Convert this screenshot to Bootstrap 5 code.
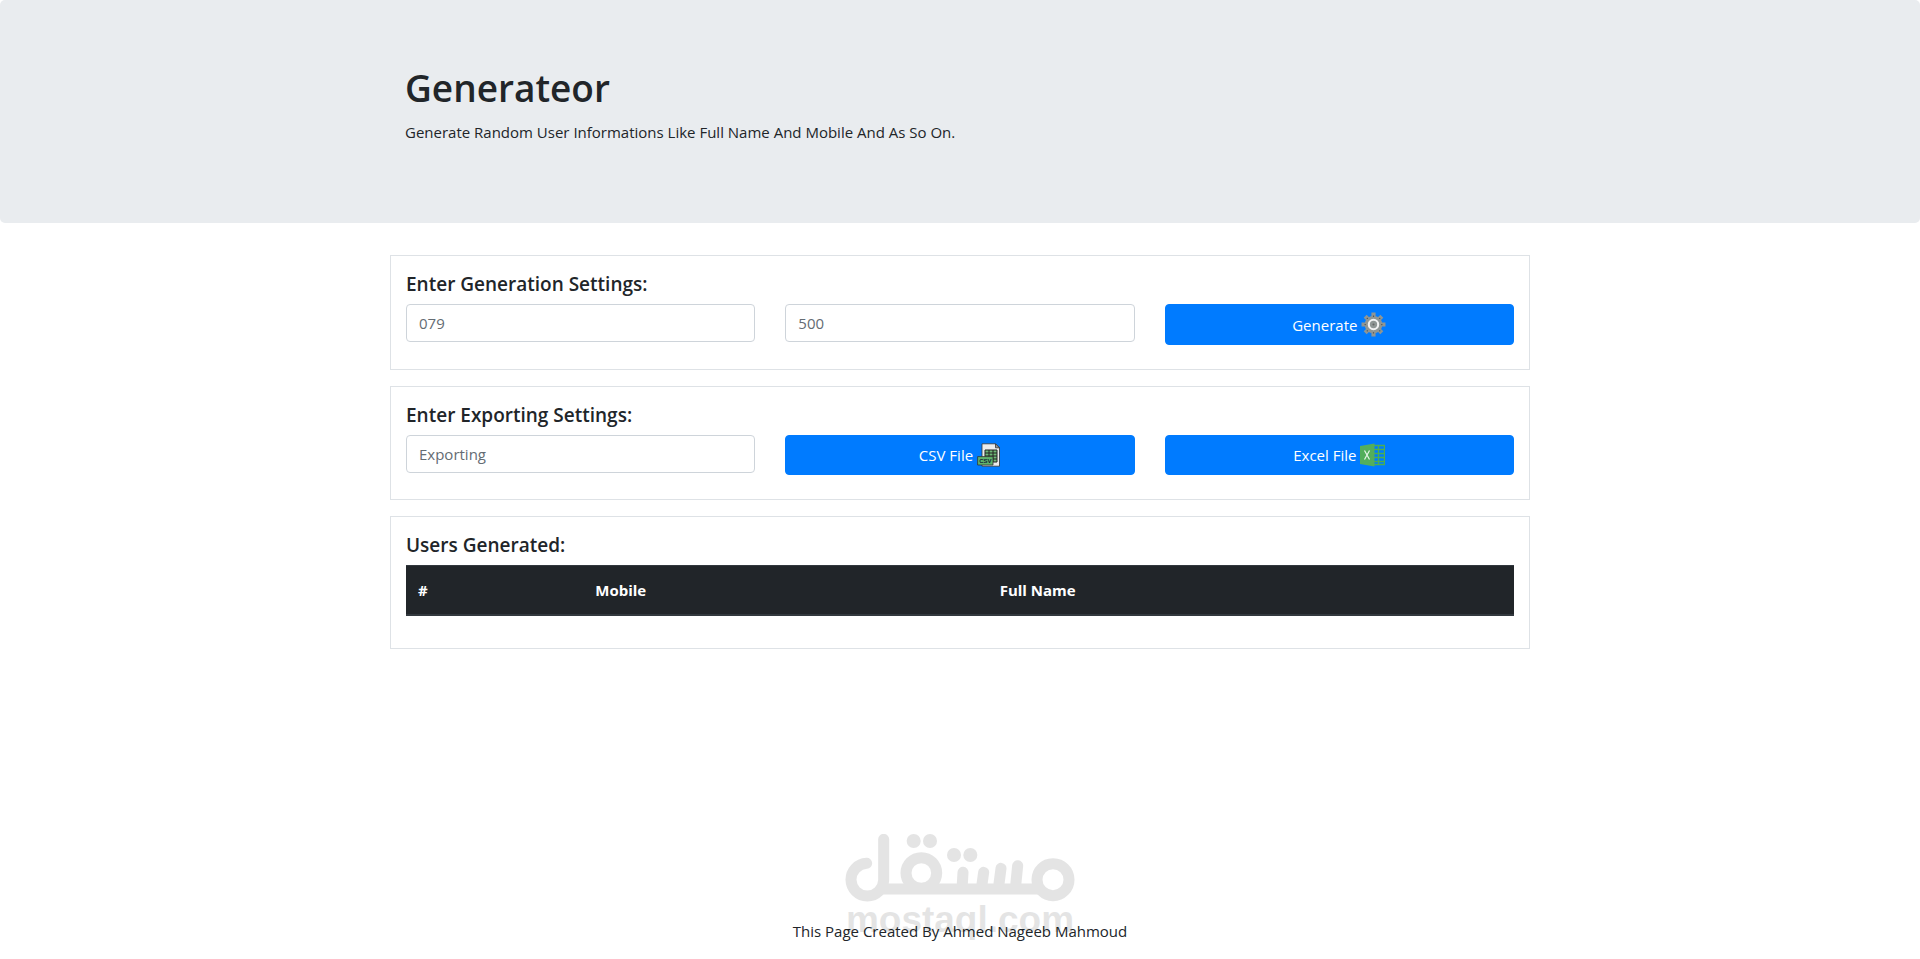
<!DOCTYPE html>
<html lang="en">
<head>
<meta charset="utf-8">
<meta name="viewport" content="width=device-width, initial-scale=1">
<title>Generateor</title>
<link href="https://cdn.jsdelivr.net/npm/bootstrap@5.3.0/dist/css/bootstrap.min.css" rel="stylesheet">
<style>
  body { font-family: "Open Sans", "Noto Sans", sans-serif; font-size: 15px; line-height: 24px; color: #212529; background: #fff; }
  .page-wrap { max-width: 1140px; }
  .row, .page-wrap { --bs-gutter-x: 30px; }
  .hero { background: #e9ecef; padding: 64px 0 63px; margin-bottom: 32px; border-radius: 5px; }
  .hero h1 { font-size: 37px; line-height: 48px; font-weight: 600; }
  .panel { border: 1px solid #dee2e6; padding: 16px 15px 24px; margin-bottom: 16px; }
  .panel h2 { font-size: 19px; line-height: 24px; font-weight: 600; }
  .form-control { font-size: 15px; line-height: 24px; border-color: #ced4da; border-radius: 4px; }
  .form-control::placeholder { color: #646c73; }
  .btn-primary { --bs-btn-bg: #007bff; --bs-btn-border-color: #007bff; --bs-btn-font-size: 15px; --bs-btn-border-radius: 4px; --bs-btn-line-height: 24px; --bs-btn-padding-y: 7px; }
  .users { table-layout: fixed; }
  .users thead th { background: #212529; color: #fff; padding: 12px; border: 0 solid #32383e; border-width: 1px 0 2px; font-weight: 700; }
  .c-num { width: 16%; } .c-mob { width: 36.5%; }
  .mark-over { position: absolute; left: 50%; bottom: 21px; transform: translateX(-50%); opacity: .1; pointer-events: none; }
  .mark-over div { font: 700 37px/36px "Liberation Sans", sans-serif; color: #000; }
</style>
</head>
<body class="d-flex flex-column min-vh-100">
<header class="hero">
  <div class="container page-wrap">
    <h1 class="mb-2">Generateor</h1>
    <p class="mb-3">Generate Random User Informations Like Full Name And Mobile And As So On.</p>
  </div>
</header>
<main class="container page-wrap px-0">
  <section class="panel">
    <h2 class="mb-2">Enter Generation Settings:</h2>
    <div class="row">
      <div class="col-4"><input class="form-control" type="text" placeholder="079" aria-label="Prefix"></div>
      <div class="col-4"><input class="form-control" type="text" placeholder="500" aria-label="Count"></div>
      <div class="col-4"><button class="btn btn-primary w-100 d-flex justify-content-center align-items-center gap-1" type="button">Generate
        <svg width="25" height="25" viewBox="0 0 24 24" aria-hidden="true"><g stroke="#8f9694" stroke-width="4"><path d="M12 .5v23M.5 12h23M4 4l16 16M20 4L4 20"/></g><circle cx="12" cy="12" r="8.5" fill="#8f9694"/><g fill="#444"><circle cx="12" cy="4" r=".6"/><circle cx="12" cy="20" r=".6"/><circle cx="4" cy="12" r=".6"/><circle cx="20" cy="12" r=".6"/><circle cx="6" cy="6" r=".6"/><circle cx="18" cy="6" r=".6"/><circle cx="6" cy="18" r=".6"/><circle cx="18" cy="18" r=".6"/></g><circle cx="12" cy="12" r="4.5" fill="#8f9694" stroke="#f2f2f2" stroke-width="2"/><circle cx="12" cy="12" r="1" fill="#666"/></svg></button></div>
    </div>
  </section>
  <section class="panel">
    <h2 class="mb-2">Enter Exporting Settings:</h2>
    <div class="row">
      <div class="col-4"><input class="form-control" type="text" placeholder="Exporting" aria-label="File name"></div>
      <div class="col-4"><button class="btn btn-primary w-100 d-flex justify-content-center align-items-center gap-1" type="button">CSV File
        <svg width="24" height="24" viewBox="0 0 24 24" aria-hidden="true"><path d="M5 .8h13.500l4 4v18.400H5z" fill="#ececec" stroke="#333" stroke-width=".8"/><path d="M18.500.8v4h4z" fill="#999" stroke="#333" stroke-width=".8"/><path d="M8 7h12v12H8z" fill="#6fb878" stroke="#222"/><path d="M8 10h12M8 13h12M16 16h4M12 7v7M16 7v12" stroke="#222" fill="none"/><path d="M.6 13.600h15.400v8.400H.6z" fill="#5fb36c" stroke="#333" stroke-width=".8"/><text x="8.300" y="20.200" text-anchor="middle" font-family="Liberation Sans, sans-serif" font-size="6" font-weight="700" fill="#123">CSV</text></svg></button></div>
      <div class="col-4"><button class="btn btn-primary w-100 d-flex justify-content-center align-items-center gap-1" type="button">Excel File
        <svg width="25" height="24" viewBox="0 0 25 24" aria-hidden="true"><path d="M14 2.500h10.500v19H14M14 6.500h10M14 10.500h10M14 14.500h10M14 18.500h10M18.500 2.500v19" fill="none" stroke="#4caf50" stroke-width="1.300"/><path d="M0 3L14.500.5v23L0 21z" fill="#53ae5b"/><path d="M4.500 7.500l5 9M9.500 7.500l-5 9" stroke="#e8f5e9" stroke-width="1.200"/></svg></button></div>
    </div>
  </section>
  <section class="panel pb-3">
    <h2 class="mb-2">Users Generated:</h2>
    <table class="users table mb-3">
      <thead><tr><th class="c-num" scope="col">#</th><th class="c-mob" scope="col">Mobile</th><th scope="col">Full Name</th></tr></thead>
    </table>
  </section>
</main>
<footer class="mt-auto position-relative text-center">
  <p class="mb-3">This Page Created By Ahmed Nageeb Mahmoud</p>
  <div class="mark-over">
    <svg class="d-block" width="230" height="68" viewBox="75 42 690 204" fill="none" stroke="#000" stroke-width="33" stroke-linecap="round" aria-hidden="true"><circle cx="699" cy="179" r="48"/><path d="M593 137L586 207M543 145L535 207M491 157L484 207M429 157L426 207M656 207H191"/><circle cx="304" cy="159" r="46"/><path d="M191 58V180A49 49 0 1 1 140 130"/><g fill="#000" stroke="none"><circle cx="281" cy="63" r="21"/><circle cx="330" cy="63" r="21"/><circle cx="402" cy="105" r="21"/><circle cx="451" cy="105" r="21"/></g></svg>
    <div>mostaql.com</div>
  </div>
</footer>
<script src="https://cdn.jsdelivr.net/npm/bootstrap@5.3.0/dist/js/bootstrap.bundle.min.js"></script>
</body>
</html>
